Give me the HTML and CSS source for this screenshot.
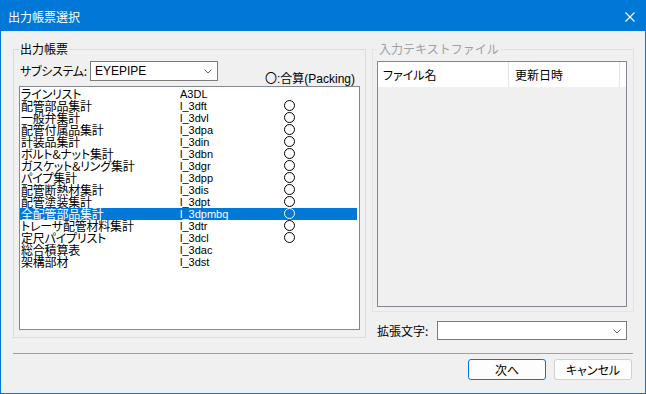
FILE: index.html
```html
<!DOCTYPE html>
<html lang="ja">
<head>
<meta charset="utf-8">
<title>出力帳票選択</title>
<link rel="stylesheet" href="styles.css">
</head>
<body>
<div class="window">
  <div class="titlebar">
    <span class="title">出力帳票選択</span>
    <svg class="close" width="10" height="10" viewBox="0 0 10 10"><path d="M0.5 0.5L9.5 9.5M9.5 0.5L0.5 9.5" stroke="#fff" stroke-width="1.1" fill="none"/></svg>
  </div>
  <div class="client">
    <div class="main">
      <fieldset class="group group-left">
        <legend class="legend">出力帳票</legend>
        <div class="sub-row">
          <span class="sub-label">サブシステム:</span>
          <div class="combo combo-sub">
            <span class="combo-text">EYEPIPE</span>
            <svg class="chev" width="8" height="5" viewBox="0 0 8 5"><path d="M0.5 0.5L4 4L7.5 0.5" stroke="#606060" fill="none"/></svg>
          </div>
          <span class="packing">〇:合算(Packing)</span>
        </div>
        <div class="listbox">
          <div class="row"><span class="c-name">ラインリスト</span><span class="c-code">A3DL</span></div>
          <div class="row"><span class="c-name">配管部品集計</span><span class="c-code">l_3dft</span><span class="c-mark"></span></div>
          <div class="row"><span class="c-name">一般弁集計</span><span class="c-code">l_3dvl</span><span class="c-mark"></span></div>
          <div class="row"><span class="c-name">配管付属品集計</span><span class="c-code">l_3dpa</span><span class="c-mark"></span></div>
          <div class="row"><span class="c-name">計装品集計</span><span class="c-code">l_3din</span><span class="c-mark"></span></div>
          <div class="row"><span class="c-name">ボルト&amp;ナット集計</span><span class="c-code">l_3dbn</span><span class="c-mark"></span></div>
          <div class="row"><span class="c-name">ガスケット&amp;リング集計</span><span class="c-code">l_3dgr</span><span class="c-mark"></span></div>
          <div class="row"><span class="c-name">パイプ集計</span><span class="c-code">l_3dpp</span><span class="c-mark"></span></div>
          <div class="row"><span class="c-name">配管断熱材集計</span><span class="c-code">l_3dis</span><span class="c-mark"></span></div>
          <div class="row"><span class="c-name">配管塗装集計</span><span class="c-code">l_3dpt</span><span class="c-mark"></span></div>
          <div class="row selected"><span class="c-name">全配管部品集計</span><span class="c-code">l_3dpmbq</span><span class="c-mark"></span></div>
          <div class="row"><span class="c-name">トレーサ配管材料集計</span><span class="c-code">l_3dtr</span><span class="c-mark"></span></div>
          <div class="row"><span class="c-name">定尺パイプリスト</span><span class="c-code">l_3dcl</span><span class="c-mark"></span></div>
          <div class="row"><span class="c-name">総合積算表</span><span class="c-code">l_3dac</span></div>
          <div class="row"><span class="c-name">架構部材</span><span class="c-code">l_3dst</span></div>
        </div>
      </fieldset>
      <div class="right-col">
        <fieldset class="group group-right">
          <legend class="legend legend-disabled">入力テキストファイル</legend>
          <div class="listview">
            <div class="lv-header">
              <span class="lv-col lv-col1">ファイル名</span>
              <span class="lv-col lv-col2">更新日時</span>
              <span class="lv-col lv-col3"></span>
            </div>
          </div>
        </fieldset>
        <div class="ext-row">
          <span class="ext-label">拡張文字:</span>
          <div class="combo combo-ext">
            <span class="combo-text"></span>
            <svg class="chev" width="8" height="5" viewBox="0 0 8 5"><path d="M0.5 0.5L4 4L7.5 0.5" stroke="#606060" fill="none"/></svg>
          </div>
        </div>
      </div>
    </div>
    <div class="separator"></div>
    <div class="buttons">
      <button class="btn btn-default">次へ</button>
      <button class="btn">キャンセル</button>
    </div>
  </div>
</div>
</body>
</html>
```
FILE: styles.css
```css
* { box-sizing: border-box; }
html, body { margin: 0; padding: 0; }
body {
  font-family: "Noto Sans CJK JP", sans-serif;
  font-size: 12px;
  color: #000;
  background: #fff;
}
.window {
  width: 646px;
  height: 394px;
  border: 1px solid #0078d7;
  display: flex;
  flex-direction: column;
}
.titlebar {
  height: 30px;
  background: #0078d7;
  display: flex;
  align-items: center;
  padding: 0 10px 0 7px;
  color: #fff;
  flex: none;
}
.title {
  font-size: 12px;
  line-height: 14px;
  margin-top: 1px;
}
.close {
  margin-left: auto;
  margin-top: 1px;
}
.client {
  flex: 1;
  background: #f0f0f0;
  padding: 11px 11px 0 12px;
  display: flex;
  flex-direction: column;
}
.main {
  display: flex;
  gap: 6px;
  align-items: flex-start;
}
.group {
  margin: 0;
  border: 1px solid #dcdcdc;
  min-width: 0;
}
.legend {
  font-size: 12px;
  line-height: 14px;
  padding: 0 1px;
}
.legend-disabled {
  color: #a0a0a0;
  padding: 0 1px 0 2px;
}
.group-left {
  width: 353px;
  padding: 0 5px 7px 5px;
}
.sub-row {
  display: flex;
  height: 25px;
  margin-top: 5px;
  align-items: flex-start;
}
.sub-label {
  line-height: 20px;
  padding-left: 1px;
  width: 71px;
  font-feature-settings: "palt";
  letter-spacing: -0.3px;
}
.combo {
  background: #fff;
  border: 1px solid #7a7a7a;
  display: flex;
  align-items: center;
  padding: 0 5px 0 4px;
}
.combo-sub {
  width: 128px;
  height: 20px;
}
.combo-text {
  font-family: "Liberation Sans", "Noto Sans CJK JP", sans-serif;
  font-size: 12px;
  line-height: 14px;
}
.chev { margin-left: auto; margin-top: 1px; }
.packing {
  margin-left: auto;
  margin-right: 5px;
  align-self: flex-end;
  line-height: 14px;
  margin-bottom: 0;
  font-family: "Liberation Sans", "Noto Sans CJK JP", sans-serif;
  font-feature-settings: "palt";
}
.listbox {
  width: 341px;
  height: 244px;
  border: 1px solid #828790;
  background: #fff;
  padding: 1px 1px 0 0;
}
.row {
  display: flex;
  height: 12px;
  line-height: 12px;
  font-size: 12px;
  white-space: nowrap;
  margin-right: 1px;
}
.row.selected {
  background: #0078d7;
  color: #fff;
}
.c-name {
  width: 160px;
  padding-left: 1px;
  font-feature-settings: "palt";
  letter-spacing: -0.2px;
}
.c-code {
  width: 104px;
  font-family: "Liberation Sans", sans-serif;
  font-size: 11px;
}
.c-mark {
  width: 11px;
  height: 11px;
  border: 1px solid #000;
  border-radius: 50%;
  margin-top: 0;
}
.row.selected .c-mark { border-color: #fff; }
.right-col {
  flex: 1;
  display: flex;
  flex-direction: column;
}
.group-right {
  border-color: #e3e3e3;
  padding: 0 6px 4px 4px;
}
.listview {
  margin-top: 5px;
  height: 246px;
  border: 1px solid #828790;
  background: #f0f0f0;
}
.lv-header {
  height: 25px;
  background: #fff;
  display: flex;
}
.lv-col {
  line-height: 25px;
  padding-left: 5px;
  border-right: 1px solid #e5e5e5;
  font-feature-settings: "palt";
}
.lv-col1 { width: 131px; }
.lv-col2 { width: 111px; padding-left: 6px; }
.lv-col3 { width: 0; border-right: none; }
.ext-row {
  display: flex;
  align-items: center;
  margin-top: 9px;
  padding-left: 5px;
}
.ext-label {
  width: 60px;
  line-height: 19px;
}
.combo-ext {
  width: 190px;
  height: 19px;
}
.separator {
  margin-top: 13px;
  height: 1px;
  background: #a0a0a0;
  margin-right: 1px;
}
.buttons {
  display: flex;
  justify-content: flex-end;
  gap: 8px;
  margin-top: 5px;
  padding-right: 2px;
}
.btn {
  width: 78px;
  height: 21px;
  font-family: "Noto Sans CJK JP", sans-serif;
  font-size: 12px;
  line-height: 14px;
  background: #fdfdfd;
  border: 1px solid #d0d0d0;
  border-radius: 3px;
  padding: 0;
  color: #000;
  font-feature-settings: "palt";
}
.btn-default {
  border-color: #0078d7;
}
```
